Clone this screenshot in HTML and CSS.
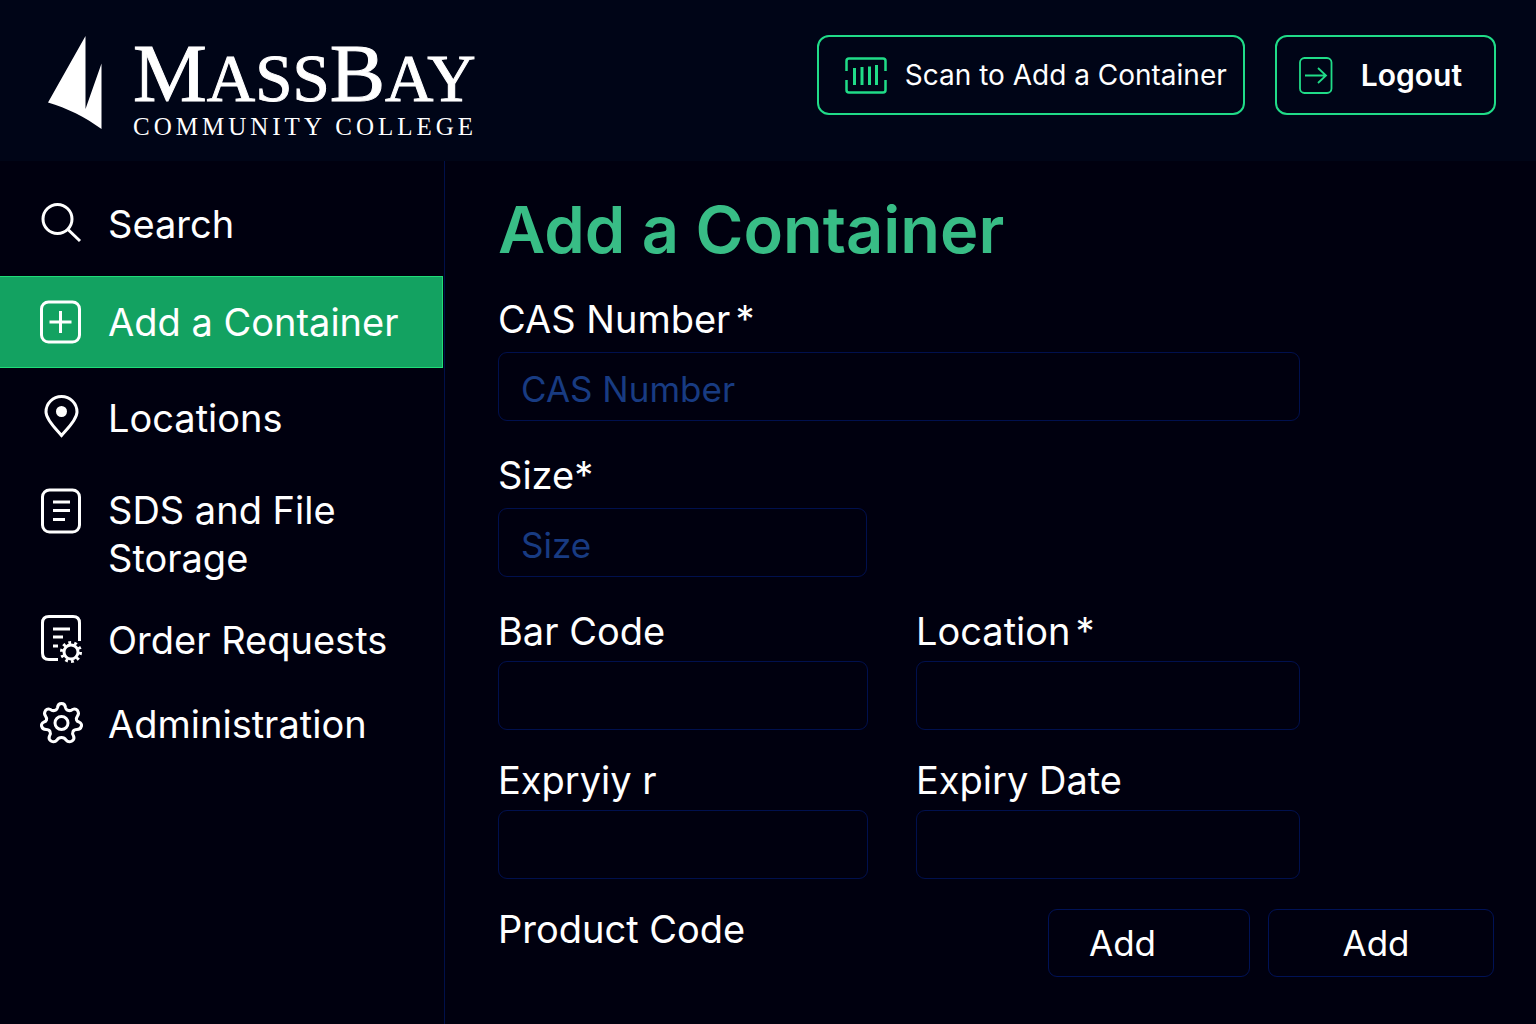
FILE: index.html
```html
<!DOCTYPE html>
<html lang="en">
<head>
<meta charset="utf-8">
<meta name="viewport" content="width=device-width, initial-scale=1">
<title>Add a Container - MassBay Community College</title>
<link rel="stylesheet" href="styles.css">
</head>
<body>
<header class="topbar">
  <a class="brand" href="#">
    <svg class="brand-mark" width="54" height="94" viewBox="0 0 54 94" fill="#fff" aria-hidden="true">
      <path d="M37.500 0V73L53.500 27.500V93C37 81 19 72 0 66.500Z"/>
    </svg>
    <span class="brand-text">
      <span class="brand-name"><span class="brand-cap">M</span>ASS<span class="brand-cap">B</span>AY</span>
      <span class="brand-sub">COMMUNITY COLLEGE</span>
    </span>
  </a>
  <div class="actions">
    <button class="action" type="button">
      <svg width="42" height="37" viewBox="0 0 42 37" fill="none" stroke="#20dc88" stroke-width="2.500" aria-hidden="true">
        <path d="M1.500 14V4Q1.500 1.500 4 1.500H38Q40.500 1.500 40.500 4V14M1.500 23V33Q1.500 35.500 4 35.500H38Q40.500 35.500 40.500 33V23"/>
        <path stroke-width="3" d="M9.500 11V28M17 10V28M24.500 9.500V28M31.500 8V28"/>
      </svg>
      <span>Scan to Add a Container</span>
    </button>
    <button class="action action-logout" type="button">
      <svg width="34" height="37" viewBox="0 0 34 37" fill="none" stroke="#20dc88" stroke-width="1.800" aria-hidden="true">
        <rect x="1" y="1" width="31.500" height="35" rx="4.500"/>
        <path d="M6 18.500H27M19 11L27 18.500L19 26"/>
      </svg>
      <span>Logout</span>
    </button>
  </div>
</header>
<div class="layout">
  <nav class="sidebar" aria-label="Main">
    <ul class="nav-group">
      <li><a class="nav-item" href="#">
        <svg class="nav-icon" viewBox="0 0 44 48" aria-hidden="true"><circle cx="17.500" cy="19" r="14.500"/><path d="M28 29.500L40 41"/></svg>
        <span>Search</span></a></li>
      <li><a class="nav-item nav-item-active" href="#" aria-current="page">
        <svg class="nav-icon" viewBox="0 0 44 48" aria-hidden="true"><rect x="1.500" y="4" width="38" height="40" rx="7"/><path d="M9.500 24H31.500M20.500 13V35"/></svg>
        <span>Add a Container</span></a></li>
      <li><a class="nav-item" href="#">
        <svg class="nav-icon" viewBox="0 0 44 48" aria-hidden="true"><path d="M21.500 41.500C17 36 6 26 6 18A15.500 15.500 0 0 1 37 18C37 26 26 36 21.500 41.500Z"/><circle cx="21.500" cy="17.500" r="5.500" fill="#fff" stroke="none"/></svg>
        <span>Locations</span></a></li>
      <li><a class="nav-item" href="#">
        <svg class="nav-icon" viewBox="0 0 44 48" aria-hidden="true"><rect x="2.500" y="4" width="37" height="42" rx="7"/><path d="M13 16H30M13 24.500H30M13 33.500H25"/></svg>
        <span>SDS and File Storage</span></a></li>
    </ul>
    <ul class="nav-group nav-group-compact">
      <li><a class="nav-item" href="#">
        <svg class="nav-icon" viewBox="0 0 44 48" aria-hidden="true"><path d="M18 43.500H9Q2.500 43.500 2.500 37V7Q2.500 .5 9 .5H33Q39.500 .5 39.500 7V25"/><path d="M13 13H30M13 21H23M13 30H18"/><circle cx="31" cy="36" r="7"/><circle cx="31" cy="36" r="9.500" stroke-width="3" stroke-dasharray="2.800 3.169"/></svg>
        <span>Order Requests</span></a></li>
      <li><a class="nav-item" href="#">
        <svg class="nav-icon" viewBox="0 0 44 48" aria-hidden="true"><circle cx="21.500" cy="23" r="6.500"/><path d="M17.500 7.500Q18 3.500 21.500 3.500Q25 3.500 25.500 7.500Q26 10 28.500 10.500Q31 11 32.500 9.500Q35.500 8 37.500 10.500Q39.500 13.500 37.500 16Q36 18 36.500 20Q37 21.500 39 22Q42 23.500 41.500 26Q40.500 29.500 37 29.500Q34 29.500 33 31.500Q32 33.500 33.500 36Q35 39 32 41Q28.500 43 26 40Q24.500 37.500 21.500 37.500Q18.500 37.500 17 40Q14.500 43 11 41Q8 39 9.500 36Q11 33.500 10 31.500Q9 29.500 6 29.500Q2.500 29.500 1.500 26Q1 23.500 4 22Q6 21.500 6.500 20Q7 18 5.500 16Q3.500 13.500 5.500 10.500Q7.500 8 10.500 9.500Q12 11 14.500 10.500Q17 10 17.500 7.500Z"/></svg>
        <span>Administration</span></a></li>
    </ul>
  </nav>
  <main class="content">
    <h1>Add a Container</h1>
    <form class="form">
      <div class="fields">
        <div class="field field-wide">
          <label for="cas">CAS Number<span class="star">*</span></label>
          <input id="cas" type="text" placeholder="CAS Number" required>
        </div>
        <div class="field field-wide field-half">
          <label for="size">Size*</label>
          <input id="size" type="text" placeholder="Size" required>
        </div>
        <div class="field">
          <label for="barcode">Bar Code</label>
          <input id="barcode" type="text">
        </div>
        <div class="field">
          <label for="location">Location<span class="star">*</span></label>
          <input id="location" type="text" required>
        </div>
        <div class="field">
          <label for="expiry">Expryiy r</label>
          <input id="expiry" type="text">
        </div>
        <div class="field">
          <label for="expiry-date">Expiry Date</label>
          <input id="expiry-date" type="text">
        </div>
      </div>
      <div class="form-footer">
        <h2>Product Code</h2>
        <div class="form-buttons">
          <button class="add add-first" type="button">Add</button>
          <button class="add" type="submit">Add</button>
        </div>
      </div>
    </form>
  </main>
</div>
</body>
</html>
```
FILE: styles.css
```css
* {
  box-sizing: border-box;
}

body {
  margin: 0;
  min-height: 100vh;
  display: flex;
  flex-direction: column;
  background: #00000f;
  color: #fff;
  font-family: Inter, "Liberation Sans", sans-serif;
  font-size: 38px;
  line-height: 48px;
}

a {
  color: inherit;
  text-decoration: none;
}

button,
input {
  font: inherit;
  color: inherit;
}

/* Header */
.topbar {
  display: flex;
  justify-content: space-between;
  align-items: flex-start;
  padding: 35px 40px 23px 48px;
  background: #000517;
}

.brand {
  display: flex;
  gap: 31px;
  font-family: "Liberation Serif", serif;
}

.brand-mark {
  flex: none;
  margin-top: 1px;
}

.brand-text {
  display: flex;
  flex-direction: column;
}

.brand-name {
  font-size: 67px;
  line-height: 76px;
  -webkit-text-stroke: 1px #fff;
}

.brand-cap {
  font-size: 83px;
}

.brand-sub {
  font-size: 25px;
  line-height: 22px;
  letter-spacing: 4px;
}

.actions {
  display: flex;
  gap: 30px;
}

.action {
  display: flex;
  align-items: center;
  gap: 18px;
  height: 80px;
  padding: 0 16px 0 26px;
  border: 2px solid #20dc88;
  border-radius: 12px;
  background: transparent;
  font-size: 28px;
  line-height: 36px;
}

.action-logout {
  gap: 28px;
  padding: 0 32px 0 22px;
  font-size: 30px;
  font-weight: 600;
}

/* Sidebar */
.layout {
  flex: 1;
  display: flex;
}

.sidebar {
  flex: none;
  width: 445px;
  padding-top: 21px;
  border-right: 1px solid #00104a;
}

.nav-group {
  display: flex;
  flex-direction: column;
  gap: 8px;
  margin: 0;
  padding: 0;
  list-style: none;
}

.nav-group-compact {
  gap: 4px;
}

.nav-item {
  display: flex;
  gap: 24px;
  padding: 18px 40px;
}

.nav-group-compact .nav-item {
  padding: 16px 40px;
}

.nav-item-active {
  margin: 2px 1px 0 0;
  padding: 21px 40px;
  border: 1px solid #20dc78;
  border-left: 0;
  background: #13a261;
}

.nav-icon {
  flex: none;
  width: 44px;
  height: 48px;
  overflow: visible;
  fill: none;
  stroke: #fff;
  stroke-width: 3;
}

/* Content */
.content {
  flex: 1;
  min-width: 0;
  padding: 29px 42px 48px 53px;
}

h1 {
  margin: 0 0 25px;
  color: #38bd86;
  font-size: 65px;
  font-weight: 600;
  line-height: 80px;
}

.form {
  display: flex;
  flex-direction: column;
  gap: 26px;
}

.fields {
  display: grid;
  grid-template-columns: 370fr 384fr;
  gap: 26px 48px;
  max-width: 802px;
}

.field {
  display: flex;
  flex-direction: column;
  gap: 6px;
}

.field-wide {
  grid-column: 1 / -1;
  gap: 9px;
  margin-bottom: 4px;
}

.field-half {
  width: 46%;
}

.star {
  margin-left: 5px;
}

input {
  width: 100%;
  height: 69px;
  padding: 4px 22px 0;
  border: 1px solid #00104e;
  border-radius: 9px;
  background: transparent;
  font-size: 35px;
}

input::placeholder {
  color: #183b82;
  opacity: 1;
}

.form-footer {
  display: flex;
  justify-content: space-between;
}

h2 {
  margin: 0;
  font-size: 38px;
  font-weight: 400;
}

.form-buttons {
  display: flex;
  gap: 18px;
  padding-top: 4px;
}

.add {
  width: 226px;
  height: 68px;
  padding: 0 10px 0 0;
  border: 1px solid #001256;
  border-radius: 9px;
  background: transparent;
  font-size: 35px;
}

.add-first {
  width: 202px;
  padding: 0 0 0 40px;
  text-align: left;
}
```
